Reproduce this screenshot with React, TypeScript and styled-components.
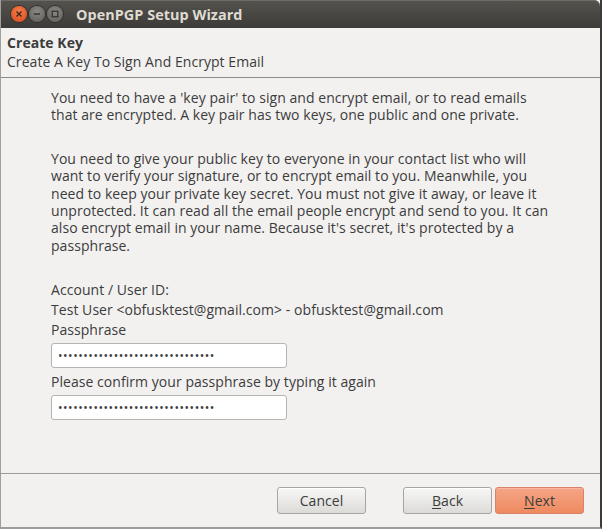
import React from "react";
import styled, { createGlobalStyle } from "styled-components";

const GlobalStyle = createGlobalStyle`
  html, body {
    margin: 0;
    padding: 0;
    background: #f2f1f0;
  }
  body {
    font-family: "Open Sans", "Noto Sans", sans-serif;
  }
`;

const Window = styled.div`
  width: 602px;
  height: 529px;
  display: flex;
  flex-direction: column;
  background: #f2f1f0;
  box-sizing: border-box;
  border-left: 1px solid #a09f9b;
  border-right: 2px solid #3c3b37;
  border-bottom: 2px solid #9d9c98;
  overflow: hidden;
  color: #3c3c3c;
  font-size: 14px;
  letter-spacing: 0.05px;
`;

const TitleBar = styled.div`
  height: 28px;
  flex: none;
  display: flex;
  align-items: center;
  padding-left: 10px;
  background: linear-gradient(#55534e, #3c3b37);
  border-top-right-radius: 6px;
  box-shadow: inset 0 1px 0 #6c6b66;
`;

const WinButton = styled.div<{ $close?: boolean }>`
  width: 16px;
  height: 16px;
  border-radius: 50%;
  margin-right: 2px;
  display: flex;
  align-items: center;
  justify-content: center;
  background: ${(p) =>
    p.$close
      ? "radial-gradient(circle at 50% 35%, #f47d4d, #d9481a)"
      : "radial-gradient(circle at 50% 35%, #8a8985, #5c5b56)"};
  box-shadow: 0 0 0 1px #33322f;
`;

const Title = styled.div`
  margin-left: 11px;
  color: #dfdbd2;
  font-weight: 700;
  font-size: 14.4px;
`;

const Header = styled.div`
  flex: none;
  height: 50px;
  box-sizing: border-box;
  padding: 5px 0 0 6px;
  border-bottom: 1px solid #8d8c88;
`;

const HeaderTitle = styled.div`
  font-weight: 700;
  line-height: 19px;
`;

const HeaderSub = styled.div`
  line-height: 19px;
`;

const Body = styled.div`
  flex: 1;
  padding: 11px 0 0 50px;
  display: flex;
  flex-direction: column;
  border-bottom: 1px solid #9d9c98;
`;

const Paragraph = styled.p`
  margin: 0 0 26px;
  line-height: 17.4px;
  white-space: nowrap;
`;

const Line = styled.div`
  line-height: 20px;
`;

const Field = styled.div`
  width: 236px;
  height: 25px;
  box-sizing: border-box;
  margin: 3px 0 4px;
  border: 1px solid #b6b4b0;
  border-radius: 3px;
  background: #fff;
  display: flex;
  align-items: center;
  padding-left: 6px;
  font-size: 12px;
  letter-spacing: 0.55px;
  color: #3c3c3c;
`;

const Footer = styled.div`
  flex: none;
  height: 53px;
  display: flex;
  align-items: center;
  box-sizing: border-box;
  padding-left: 276px;
  padding-bottom: 1px;
`;

const Button = styled.div<{ $primary?: boolean }>`
  width: 89px;
  height: 27px;
  box-sizing: border-box;
  border-radius: 3px;
  display: flex;
  align-items: center;
  justify-content: center;
  color: #3c3c3c;
  border: 1px solid ${(p) => (p.$primary ? "#d9826a" : "#a6a5a1")};
  background: ${(p) =>
    p.$primary
      ? "linear-gradient(#f5a586, #ee8a60)"
      : "linear-gradient(#f7f7f6, #dcdbd8)"};
  box-shadow: inset 0 1px 0 ${(p) => (p.$primary ? "#f8b89f" : "#ffffff")};
`;

const Spacer = styled.div<{ $w: number }>`
  width: ${(p) => p.$w}px;
`;

const Mnemonic = styled.span`
  text-decoration: underline;
  text-underline-offset: 2px;
`;

export default function App() {
  const dots = "•".repeat(31);
  return (
    <>
      <GlobalStyle />
      <Window>
        <TitleBar>
          <WinButton $close>
            <svg width="8" height="8" viewBox="0 0 8 8">
              <path d="M1.5 1.5 L6.5 6.5 M6.5 1.5 L1.5 6.5" stroke="#3a2418" strokeWidth="1.4" />
            </svg>
          </WinButton>
          <WinButton>
            <svg width="8" height="8" viewBox="0 0 8 8">
              <path d="M1 4 H7" stroke="#2e2d2a" strokeWidth="1.4" />
            </svg>
          </WinButton>
          <WinButton>
            <svg width="8" height="8" viewBox="0 0 8 8">
              <rect x="1.2" y="1.2" width="5.6" height="5.6" fill="none" stroke="#2e2d2a" strokeWidth="1.2" />
            </svg>
          </WinButton>
          <Title>OpenPGP Setup Wizard</Title>
        </TitleBar>
        <Header>
          <HeaderTitle>Create Key</HeaderTitle>
          <HeaderSub>Create A Key To Sign And Encrypt Email</HeaderSub>
        </Header>
        <Body>
          <Paragraph>
            You need to have a 'key pair' to sign and encrypt email, or to read emails
            <br />
            that are encrypted. A key pair has two keys, one public and one private.
          </Paragraph>
          <Paragraph>
            You need to give your public key to everyone in your contact list who will
            <br />
            want to verify your signature, or to encrypt email to you. Meanwhile, you
            <br />
            need to keep your private key secret. You must not give it away, or leave it
            <br />
            unprotected. It can read all the email people encrypt and send to you. It can
            <br />
            also encrypt email in your name. Because it's secret, it's protected by a
            <br />
            passphrase.
          </Paragraph>
          <Line>Account / User ID:</Line>
          <Line>Test User &lt;obfusktest@gmail.com&gt; - obfusktest@gmail.com</Line>
          <Line>Passphrase</Line>
          <Field>{dots}</Field>
          <Line>Please confirm your passphrase by typing it again</Line>
          <Field>{dots}</Field>
        </Body>
        <Footer>
          <Button>Cancel</Button>
          <Spacer $w={37} />
          <Button>
            <span>
              <Mnemonic>B</Mnemonic>ack
            </span>
          </Button>
          <Spacer $w={3} />
          <Button $primary>
            <span>
              <Mnemonic>N</Mnemonic>ext
            </span>
          </Button>
        </Footer>
      </Window>
    </>
  );
}
